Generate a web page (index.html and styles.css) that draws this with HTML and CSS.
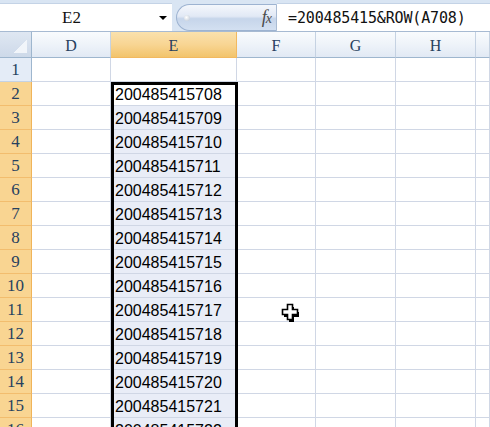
FILE: index.html
```html
<!DOCTYPE html>
<html>
<head>
<meta charset="utf-8">
<link rel="stylesheet" href="styles.css">
</head>
<body>
<div class="app">
  <div class="fbar">
    <div class="namebox"><span class="name">E2</span><span class="caret"></span></div>
    <div class="pill"><span class="knob"></span><span class="fx"><i>f</i><i class="x">x</i></span></div>
    <div class="formula">=200485415&amp;ROW(A708)</div>
  </div>
  <div class="sheet">
    <div class="corner"><span class="tri"></span></div>
    <div class="ch">D</div>
    <div class="ch sel">E</div>
    <div class="ch">F</div>
    <div class="ch">G</div>
    <div class="ch">H</div>
    <div class="ch last"></div>

    <div class="rh">1</div><div class="c"></div><div class="c"></div><div class="c"></div><div class="c"></div><div class="c"></div><div class="c last"></div>
    <div class="rh sel">2</div><div class="c"></div><div class="c e active">200485415708</div><div class="c"></div><div class="c"></div><div class="c"></div><div class="c last"></div>
    <div class="rh sel">3</div><div class="c"></div><div class="c e">200485415709</div><div class="c"></div><div class="c"></div><div class="c"></div><div class="c last"></div>
    <div class="rh sel">4</div><div class="c"></div><div class="c e">200485415710</div><div class="c"></div><div class="c"></div><div class="c"></div><div class="c last"></div>
    <div class="rh sel">5</div><div class="c"></div><div class="c e">200485415711</div><div class="c"></div><div class="c"></div><div class="c"></div><div class="c last"></div>
    <div class="rh sel">6</div><div class="c"></div><div class="c e">200485415712</div><div class="c"></div><div class="c"></div><div class="c"></div><div class="c last"></div>
    <div class="rh sel">7</div><div class="c"></div><div class="c e">200485415713</div><div class="c"></div><div class="c"></div><div class="c"></div><div class="c last"></div>
    <div class="rh sel">8</div><div class="c"></div><div class="c e">200485415714</div><div class="c"></div><div class="c"></div><div class="c"></div><div class="c last"></div>
    <div class="rh sel">9</div><div class="c"></div><div class="c e">200485415715</div><div class="c"></div><div class="c"></div><div class="c"></div><div class="c last"></div>
    <div class="rh sel">10</div><div class="c"></div><div class="c e">200485415716</div><div class="c"></div><div class="c"></div><div class="c"></div><div class="c last"></div>
    <div class="rh sel">11</div><div class="c"></div><div class="c e">200485415717</div><div class="c"></div><div class="c"></div><div class="c"></div><div class="c last"></div>
    <div class="rh sel">12</div><div class="c"></div><div class="c e">200485415718</div><div class="c"></div><div class="c"></div><div class="c"></div><div class="c last"></div>
    <div class="rh sel">13</div><div class="c"></div><div class="c e">200485415719</div><div class="c"></div><div class="c"></div><div class="c"></div><div class="c last"></div>
    <div class="rh sel">14</div><div class="c"></div><div class="c e">200485415720</div><div class="c"></div><div class="c"></div><div class="c"></div><div class="c last"></div>
    <div class="rh sel">15</div><div class="c"></div><div class="c e">200485415721</div><div class="c"></div><div class="c"></div><div class="c"></div><div class="c last"></div>
    <div class="rh sel">16</div><div class="c"></div><div class="c e">200485415722</div><div class="c"></div><div class="c"></div><div class="c"></div><div class="c last"></div>

    <div class="selbox"></div>
  </div>
  <svg class="cursor" width="22" height="20" viewBox="0 0 22 20">
    <path d="M7.5 2.5h5v5h5v5h-5v5h-5v-5h-5v-5h5z" fill="#000" transform="translate(1.5,1.5)"/>
    <path d="M7.5 1.5h5v5h5v5h-5v5h-5v-5h-5v-5h5z" fill="#fff" stroke="#000" stroke-width="1.6"/>
  </svg>
</div>
</body>
</html>
```

FILE: styles.css
```css
* { box-sizing: border-box; }
html, body { margin: 0; padding: 0; background: #fff; }
body { width: 490px; height: 427px; overflow: hidden; }

.app { position: relative; width: 490px; height: 427px; overflow: hidden; }

/* formula bar */
.fbar {
  display: flex;
  height: 32px;
  background: #d9e5f3;
  padding-top: 3px;
  border-bottom: 1px solid #a7bad2;
}
.namebox {
  width: 172px;
  background: #fff;
  display: flex;
  align-items: center;
  border-top: 1px solid #c4d3e6;
}
.name {
  flex: 1;
  text-align: center;
  font-family: "Liberation Serif", serif;
  font-size: 17px;
  color: #111;
  padding-right: 16px;
  margin-top: 1px;
}
.caret {
  width: 0; height: 0;
  border-left: 4px solid transparent;
  border-right: 4px solid transparent;
  border-top: 4px solid #000;
  margin-right: 5px;
  margin-top: 1px;
}
.pill {
  margin-left: 4px;
  width: 101px;
  margin-top: 1px;
  height: 27px;
  border: 1px solid #9db3d1;
  border-right: 1px solid #a9bbd3;
  border-radius: 14px 0 0 14px;
  background: linear-gradient(#f4f7fc 0%, #e2e9f5 45%, #c6d5ea 55%, #d3e0f1 100%);
  display: flex;
  align-items: center;
}
.knob {
  width: 6px; height: 6px;
  border-radius: 50%;
  background: radial-gradient(circle at 40% 40%, #ffffff, #b9c4d2);
  margin-left: 7px;
}
.fx {
  margin-left: auto;
  margin-right: 5px;
  font-family: "Liberation Serif", serif;
  font-style: italic;
  font-size: 18px;
  color: #4a4a4a;
  letter-spacing: -1px;
}
.fx i { font-style: italic; }
.fx .x { font-size: 14px; }
.formula {
  flex: 1;
  background: #fff;
  border-top: 1px solid #c4d3e6;
  font-family: "DejaVu Sans Mono", monospace;
  font-size: 15px;
  letter-spacing: -0.15px;
  color: #111;
  padding-left: 11px;
  line-height: 28px;
  white-space: nowrap;
}

/* sheet grid */
.sheet {
  display: grid;
  grid-template-columns: 32px 79px 126px 79px 80px 80px 14px;
  grid-template-rows: 26px repeat(16, 24px);
  position: relative;
}
.corner {
  background: linear-gradient(#dfe7f2, #cdd9e9);
  border-right: 1px solid #9eb6ce;
  border-bottom: 1px solid #9eb6ce;
  position: relative;
}
.tri {
  position: absolute;
  right: 4px; bottom: 4px;
  width: 13px; height: 13px;
  background: linear-gradient(135deg, transparent 50%, #f1f5fa 50%);
}
.ch {
  background: linear-gradient(#f9fbfd 0%, #eef3f9 50%, #e1e9f4 100%);
  border-right: 1px solid #c5d2e2;
  border-bottom: 1px solid #9eb6ce;
  display: flex;
  align-items: center;
  justify-content: center;
  font-family: "Liberation Serif", serif;
  font-size: 16px;
  color: #27415f;
  padding-top: 2px;
}
.ch.sel {
  background: linear-gradient(#fae1ad 0%, #f8d593 50%, #f2c46c 100%);
  border-right-color: #f2b960;
  border-bottom-color: #f2b960;
}
.rh {
  background: #e4ecf7;
  border-right: 1px solid #9eb6ce;
  border-bottom: 1px solid #c5d2e2;
  display: flex;
  align-items: center;
  justify-content: center;
  font-family: "Liberation Serif", serif;
  font-size: 17px;
  color: #27415f;
  padding-top: 1px;
}
.rh.sel {
  background: #f9d592;
  border-right-color: #f0b45a;
  border-bottom-color: #f2bd6e;
}
.c {
  border-right: 1px solid #d0d7e5;
  border-bottom: 1px solid #d0d7e5;
  background: #fff;
}
.c.e {
  background: #e9edf7;
  font-family: "Liberation Sans", Arial, sans-serif;
  font-size: 16px;
  color: #000;
  padding-left: 4px;
  padding-top: 1px;
  line-height: 23px;
  white-space: nowrap;
  overflow: hidden;
}
.c.e.active { background: #fff; }

/* selection outline overlays the grid */
.selbox {
  position: absolute;
  left: 111px;
  top: 50px;
  width: 127px;
  height: 400px;
  border: 3px solid #000;
  pointer-events: none;
}

.cursor {
  position: absolute;
  left: 280px;
  top: 303px;
}
```
